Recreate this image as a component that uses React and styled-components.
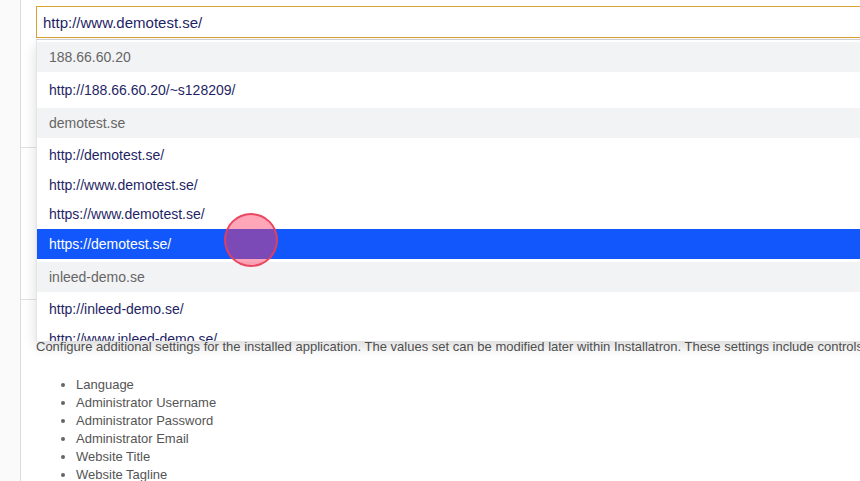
import React from "react";
import styled, { createGlobalStyle } from "styled-components";

const Global = createGlobalStyle`
  html, body { margin: 0; padding: 0; overflow: hidden; background: #fff; }
  body { font-family: "Liberation Sans", Arial, sans-serif; width: 860px; height: 481px; }
`;

const Page = styled.div`
  display: flex;
  width: 860px;
  height: 481px;
  overflow: hidden;
`;

const Rail = styled.div`
  flex: 0 0 20px;
  background: #fafafa;
  border-right: 1px solid #dcdcdc;
`;

const Main = styled.div`
  flex: 1;
  position: relative;
  min-width: 0;
`;

const Section = styled.div`
  display: flow-root;
  height: ${(p) => p.$h}px;
  padding-top: ${(p) => p.$pt || 0}px;
  border-bottom: ${(p) => (p.$line ? "1px solid #e2e2e2" : "none")};
  box-sizing: border-box;
`;

const Field = styled.div`
  position: relative;
  margin-left: 15px;
  width: 1000px;
`;

const Input = styled.div`
  box-sizing: border-box;
  height: 32px;
  border: 1px solid #dca235;
  padding: 0 6px;
  display: flex;
  align-items: center;
  font-size: 15px;
  color: #1f1f66;
  background: #fff;
`;

const Dropdown = styled.div`
  position: absolute;
  left: 0;
  top: 33px;
  width: 1000px;
  height: 302px;
  box-sizing: border-box;
  border-top: 1px solid #cfcfcf;
  border-left: 1px solid #e4e4e4;
  padding-top: 2px;
  background: #fff;
  overflow: hidden;
  box-shadow: 0 6px 12px rgba(0, 0, 0, 0.14);
  z-index: 5;
`;

const Group = styled.div`
  padding-bottom: 3px;
`;

const GroupHead = styled.div`
  height: 30px;
  background: #f2f3f5;
  color: #666;
  font-size: 14px;
  display: flex;
  align-items: center;
  padding-left: 12px;
  margin-bottom: 3px;
`;

const Option = styled.div`
  height: 29.5px;
  display: flex;
  align-items: center;
  padding-left: 12px;
  font-size: 14px;
  color: ${(p) => (p.$active ? "#fff" : "#1f1f66")};
  background: ${(p) => (p.$active ? "#1157fb" : "transparent")};
`;

const Content = styled.div`
  display: flow-root;
  padding: 0 0 0 15px;
  color: #555;
  font-size: 13px;
`;

const Para = styled.p`
  margin: 39px 0 0;
  line-height: 16px;
  white-space: nowrap;
`;

const List = styled.ul`
  margin: 21px 0 0;
  padding-left: 40px;
  line-height: 18px;
  li::marker { color: #666; }
`;

const Cursor = styled.div`
  position: absolute;
  left: 203px;
  top: 213px;
  width: 50px;
  height: 50px;
  border-radius: 50%;
  background: rgba(255, 60, 100, 0.45);
  border: 2px solid rgba(232, 62, 88, 0.9);
  z-index: 10;
  pointer-events: none;
`;

const groups = [
  { head: "188.66.60.20", items: ["http://188.66.60.20/~s128209/"] },
  {
    head: "demotest.se",
    items: [
      "http://demotest.se/",
      "http://www.demotest.se/",
      "https://www.demotest.se/",
      "https://demotest.se/",
    ],
  },
  {
    head: "inleed-demo.se",
    items: ["http://inleed-demo.se/", "http://www.inleed-demo.se/", "https://www.inleed-demo.se/"],
  },
];

export default function App() {
  return (
    <>
      <Global />
      <Page>
        <Rail />
        <Main>
          <Section $h={148} $pt={6} $line>
            <Field>
              <Input>http://www.demotest.se/</Input>
              <Dropdown>
                {groups.map((g) => (
                  <Group key={g.head}>
                    <GroupHead>{g.head}</GroupHead>
                    {g.items.map((it) => (
                      <Option key={it} $active={it === "https://demotest.se/"}>
                        {it}
                      </Option>
                    ))}
                  </Group>
                ))}
              </Dropdown>
            </Field>
          </Section>
          <Section $h={152} $line />
          <Content>
            <Para>
              Configure additional settings for the installed application. The values set can be modified later within Installatron. These settings include controls for the
            </Para>
            <List>
              <li>Language</li>
              <li>Administrator Username</li>
              <li>Administrator Password</li>
              <li>Administrator Email</li>
              <li>Website Title</li>
              <li>Website Tagline</li>
            </List>
          </Content>
          <Cursor />
        </Main>
      </Page>
    </>
  );
}
